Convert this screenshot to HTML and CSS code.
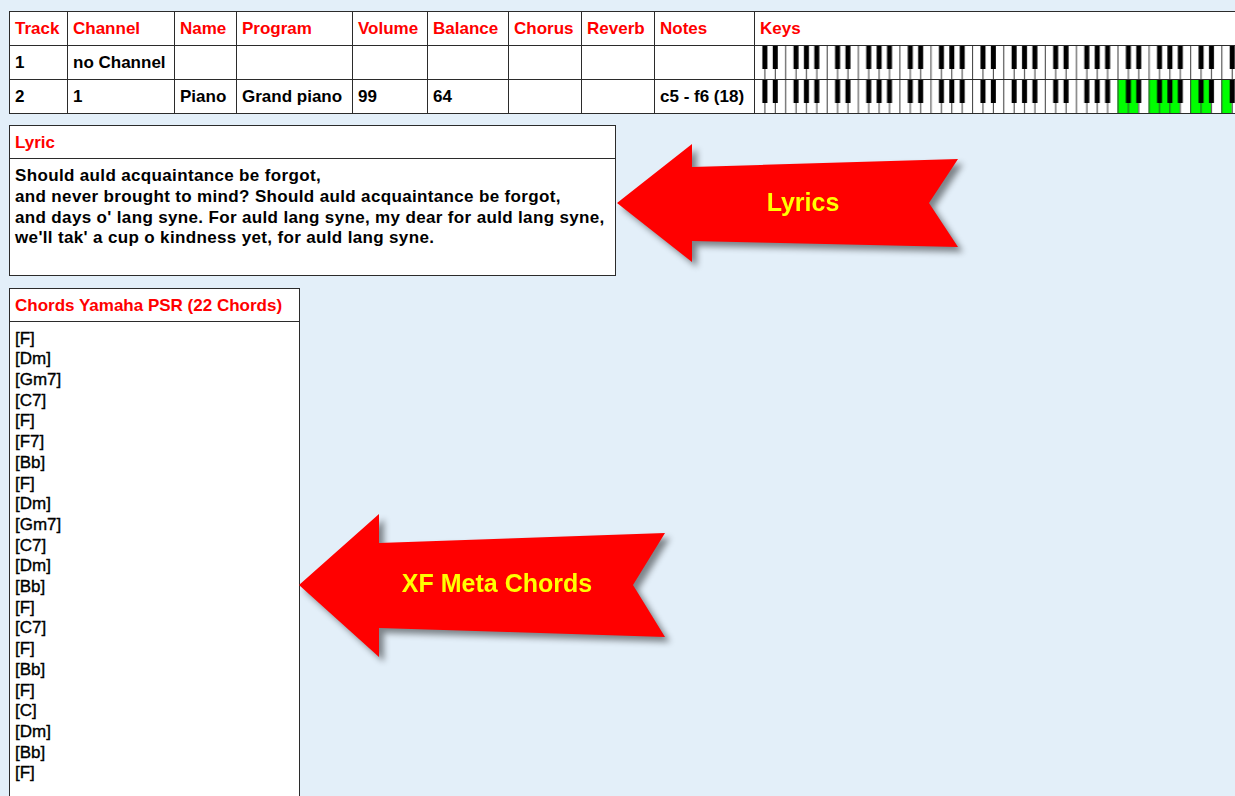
FILE: index.html
```html
<!DOCTYPE HTML>
<html lang="en">
<head>
    <meta charset="UTF-8">
    <title>MIDI file info</title>
    <link rel="stylesheet" href="styles.css">
</head>
<body>
<div class="page">

    <table class="tracks">
        <colgroup>
            <col class="col-track">
            <col class="col-channel">
            <col class="col-name">
            <col class="col-program">
            <col class="col-volume">
            <col class="col-balance">
            <col class="col-chorus">
            <col class="col-reverb">
            <col class="col-notes">
            <col class="col-keys">
        </colgroup>
        <tr>
            <th>Track</th>
            <th>Channel</th>
            <th>Name</th>
            <th>Program</th>
            <th>Volume</th>
            <th>Balance</th>
            <th>Chorus</th>
            <th>Reverb</th>
            <th>Notes</th>
            <th>Keys</th>
        </tr>
        <tr>
            <td>1</td>
            <td>no Channel</td>
            <td></td>
            <td></td>
            <td></td>
            <td></td>
            <td></td>
            <td></td>
            <td></td>
            <td class="keys">
                <svg class="keyboard" width="500" height="33">
                    <defs>
                        <pattern id="octave1" x="-1" width="72.7" height="33" patternUnits="userSpaceOnUse">
                            <path d="M0 0h1v33h-1zM10.39 0h1v33h-1zM20.77 0h1v33h-1zM31.16 0h1v33h-1zM41.54 0h1v33h-1zM51.93 0h1v33h-1zM62.31 0h1v33h-1z" fill="#3a3a3a"/>
                            <path d="M8.39 0h5v23h-5zM18.77 0h5v23h-5zM39.54 0h5v23h-5zM49.93 0h5v23h-5zM60.31 0h5v23h-5z" fill="#000"/>
                        </pattern>
                    </defs>
                    <rect width="500" height="33" fill="url(#octave1)"/>
                </svg>
            </td>
        </tr>
        <tr>
            <td>2</td>
            <td>1</td>
            <td>Piano</td>
            <td>Grand piano</td>
            <td>99</td>
            <td>64</td>
            <td></td>
            <td></td>
            <td>c5 - f6 (18)</td>
            <td class="keys">
                <svg class="keyboard" width="500" height="33">
                    <defs>
                        <pattern id="octave2" x="-1" width="72.7" height="33" patternUnits="userSpaceOnUse">
                            <path d="M0 0h1v33h-1zM10.39 0h1v33h-1zM20.77 0h1v33h-1zM31.16 0h1v33h-1zM41.54 0h1v33h-1zM51.93 0h1v33h-1zM62.31 0h1v33h-1z" fill="#3a3a3a"/>
                            <path d="M8.39 0h5v23h-5zM18.77 0h5v23h-5zM39.54 0h5v23h-5zM49.93 0h5v23h-5zM60.31 0h5v23h-5z" fill="#000"/>
                        </pattern>
                    </defs>
                    <!-- pressed keys c5 - f6 -->
                    <g fill="#00ff00">
                        <rect x="362.5" width="20.77" height="33"/>
                        <rect x="393.66" width="31.16" height="33"/>
                        <rect x="435.2" width="20.77" height="33"/>
                        <rect x="466.36" width="10.39" height="33"/>
                    </g>
                    <rect width="500" height="33" fill="url(#octave2)"/>
                </svg>
            </td>
        </tr>
    </table>

    <div class="box lyric">
        <div class="box-head">Lyric</div>
        <div class="box-body">
            Should auld acquaintance be forgot,<br>
            and never brought to mind? Should auld acquaintance be forgot,<br>
            and days o' lang syne. For auld lang syne, my dear for auld lang syne,<br>
            we'll tak' a cup o kindness yet, for auld lang syne.
        </div>
    </div>

    <div class="box chords">
        <div class="box-head">Chords Yamaha PSR (22 Chords)</div>
        <div class="box-body">
            [F]<br>[Dm]<br>[Gm7]<br>[C7]<br>[F]<br>[F7]<br>[Bb]<br>[F]<br>[Dm]<br>[Gm7]<br>[C7]<br>
            [Dm]<br>[Bb]<br>[F]<br>[C7]<br>[F]<br>[Bb]<br>[F]<br>[C]<br>[Dm]<br>[Bb]<br>[F]
        </div>
    </div>

    <!-- callout arrows -->
    <svg class="arrow arrow-lyrics" width="380" height="150">
        <polygon points="17,73 92,14 92,37 358,29 329,73 358,117 92,111 92,132" fill="#ff0000"/>
        <text x="203" y="81" class="arrow-text">Lyrics</text>
    </svg>

    <svg class="arrow arrow-chords" width="400" height="180">
        <polygon points="14,85 94,14 94,43 380,33 348,85 380,137 94,128 94,157" fill="#ff0000"/>
        <text x="212" y="92" class="arrow-text">XF Meta Chords</text>
    </svg>

</div>
</body>
</html>
```

FILE: styles.css
```css
body {
    margin: 0;
    background-color: #e3eff9;
    font-family: "Liberation Sans", Arial, sans-serif;
    font-size: 17px;
    overflow: hidden;
}
.page {
    position: relative;
    height: 796px;
    box-sizing: border-box;
    padding: 11px 0 0 9px;
    display: flex;
    flex-direction: column;
    align-items: flex-start;
    gap: 11.5px;
}
.tracks {
    border-collapse: collapse;
    table-layout: fixed;
    width: 1245px;
    background-color: #fff;
    flex-shrink: 0;
}
.col-track { width: 58px; }
.col-channel { width: 107px; }
.col-name { width: 62px; }
.col-program { width: 116px; }
.col-volume { width: 75px; }
.col-balance { width: 81px; }
.col-chorus { width: 73px; }
.col-reverb { width: 73px; }
.col-notes { width: 100px; }
.col-keys { width: 500px; }
.tracks tr {
    height: 33.6px;
}
.tracks th,
.tracks td {
    border: 1px solid #2b2b2b;
    padding: 1px 5px 0 5px;
    text-align: left;
    white-space: nowrap;
    overflow: hidden;
    font-weight: bold;
}
.tracks th {
    color: #ff0000;
}
.tracks td {
    color: #000;
}
.tracks td.keys {
    padding: 0;
    vertical-align: top;
}
.keyboard {
    display: block;
}
.box {
    background-color: #fff;
    border: 1px solid #2b2b2b;
    flex-shrink: 0;
}
.lyric {
    width: 605px;
    height: 149px;
}
.chords {
    width: 289px;
    height: 520px;
}
.box-head {
    height: 32px;
    line-height: 33px;
    padding: 0 5px;
    border-bottom: 1px solid #2b2b2b;
    color: #ff0000;
    font-weight: bold;
}
.box-body {
    padding: 7px 5px 0 5px;
    line-height: 20.7px;
    color: #000;
}
.lyric .box-body {
    font-weight: bold;
    letter-spacing: 0.35px;
}
.chords .box-body {
    -webkit-text-stroke: 0.35px #000;
}
.arrow {
    position: absolute;
    overflow: visible;
    filter: drop-shadow(5px 5px 3px rgba(0, 0, 0, 0.45));
}
.arrow-lyrics {
    left: 600px;
    top: 130px;
}
.arrow-chords {
    left: 285px;
    top: 500px;
}
.arrow-text {
    font-family: "Liberation Sans", Arial, sans-serif;
    font-size: 25px;
    font-weight: bold;
    fill: #ffff00;
    text-anchor: middle;
}
```
